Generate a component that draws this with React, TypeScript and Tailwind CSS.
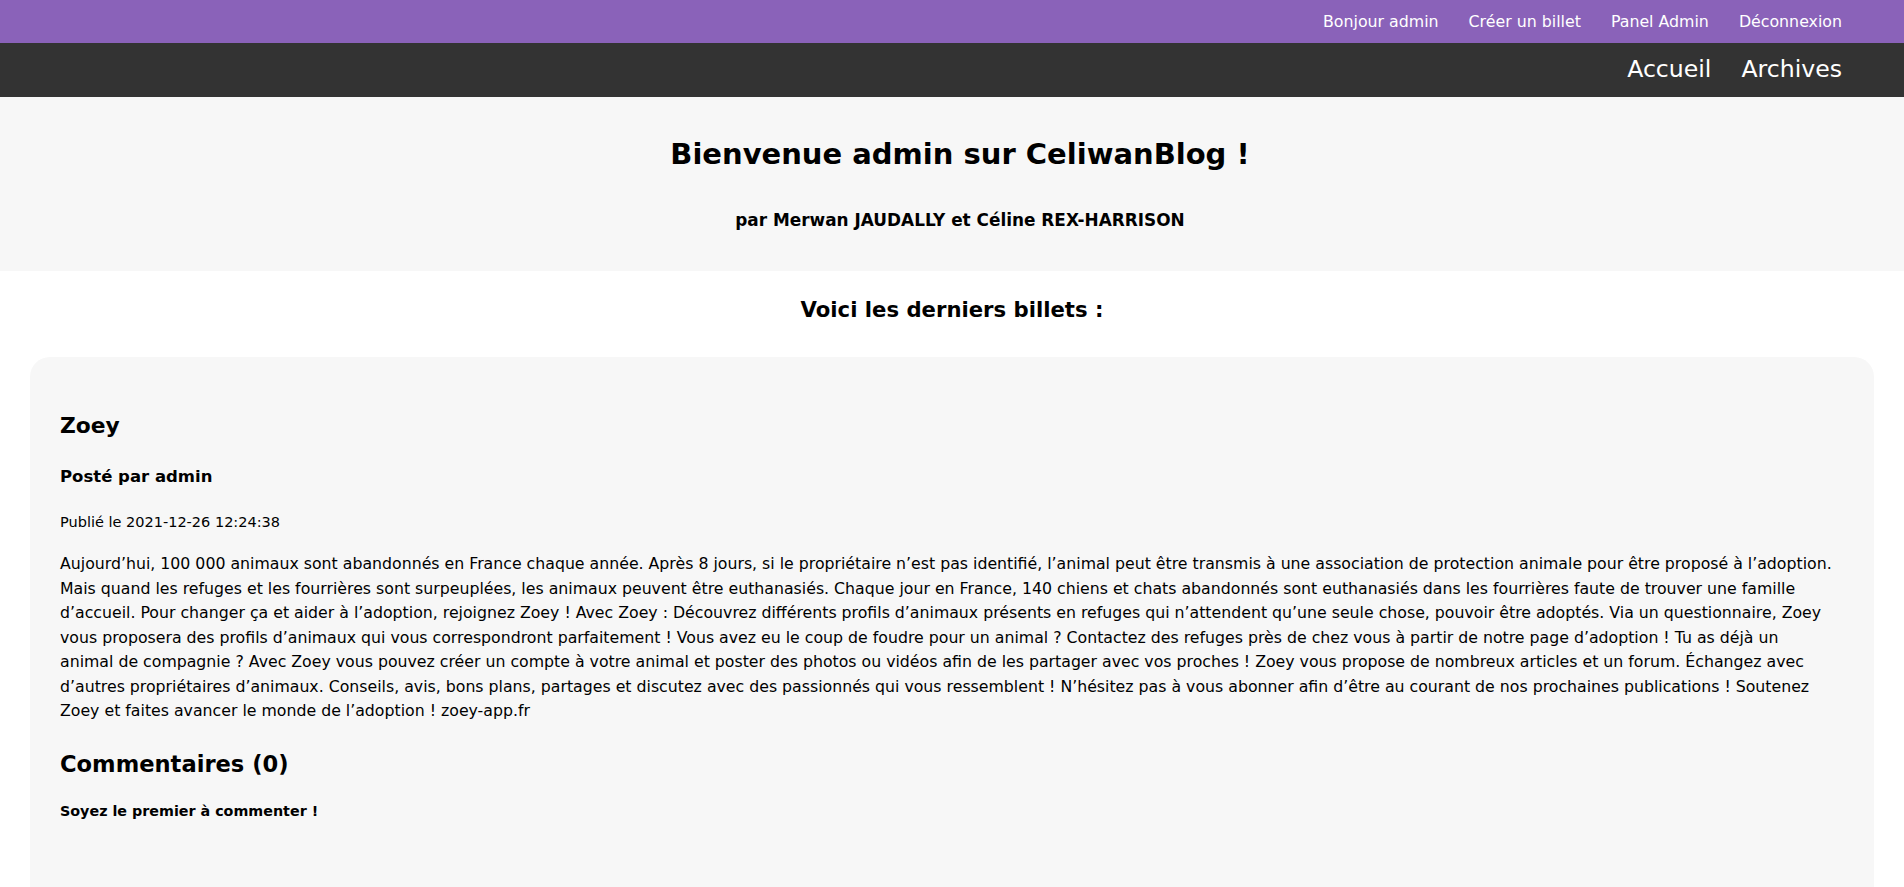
const topLinks = ["Bonjour admin", "Créer un billet", "Panel Admin", "Déconnexion"];
const mainLinks = ["Accueil", "Archives"];

// lignes coupées comme sur la maquette
const contenu = [
  "Aujourd’hui, 100 000 animaux sont abandonnés en France chaque année. Après 8 jours, si le propriétaire n’est pas identifié, l’animal peut être transmis à une association de protection animale pour être proposé à l’adoption.",
  "Mais quand les refuges et les fourrières sont surpeuplées, les animaux peuvent être euthanasiés. Chaque jour en France, 140 chiens et chats abandonnés sont euthanasiés dans les fourrières faute de trouver une famille",
  "d’accueil. Pour changer ça et aider à l’adoption, rejoignez Zoey ! Avec Zoey : Découvrez différents profils d’animaux présents en refuges qui n’attendent qu’une seule chose, pouvoir être adoptés. Via un questionnaire, Zoey",
  "vous proposera des profils d’animaux qui vous correspondront parfaitement ! Vous avez eu le coup de foudre pour un animal ? Contactez des refuges près de chez vous à partir de notre page d’adoption ! Tu as déjà un",
  "animal de compagnie ? Avec Zoey vous pouvez créer un compte à votre animal et poster des photos ou vidéos afin de les partager avec vos proches ! Zoey vous propose de nombreux articles et un forum. Échangez avec",
  "d’autres propriétaires d’animaux. Conseils, avis, bons plans, partages et discutez avec des passionnés qui vous ressemblent ! N’hésitez pas à vous abonner afin d’être au courant de nos prochaines publications ! Soutenez",
  "Zoey et faites avancer le monde de l’adoption ! zoey-app.fr",
];

export default function App() {
  return (
    <div className="min-h-screen bg-white text-black font-['DejaVu_Sans',sans-serif]">
      {/* Barre admin */}
      <nav className="h-[43px] bg-[#8a62b9] flex items-center justify-end gap-[30px] pr-[62px] text-white text-[15.8px]">
        {topLinks.map((l) => (
          <a key={l} href="#" className="leading-none">
            {l}
          </a>
        ))}
      </nav>

      {/* Menu principal */}
      <nav className="h-[54px] bg-[#333333] flex items-center justify-end gap-[30px] pr-[62px] text-white text-[23.6px]">
        {mainLinks.map((l) => (
          <a key={l} href="#" className="leading-none">
            {l}
          </a>
        ))}
      </nav>

      {/* En-tête */}
      <header className="h-[174px] bg-[#f7f7f7] pt-[39px] pl-[16px] text-center">
        <h1 className="text-[29px] leading-[36px] font-bold">
          Bienvenue admin sur CeliwanBlog !
        </h1>
        <p className="mt-[36px] text-[16.9px] leading-[24px] font-bold">
          par Merwan JAUDALLY et Céline REX-HARRISON
        </p>
      </header>

      <h2 className="mt-[25px] text-center text-[21.2px] leading-[28px] font-bold">
        Voici les derniers billets :
      </h2>

      {/* Billet */}
      <article className="mt-[33px] mx-[30px] rounded-[20px] bg-[#f7f7f7] pl-[30px] pr-[30px] pt-[55px] pb-[120px]">
        <h2 className="text-[21.8px] leading-[28px] font-bold">Zoey</h2>
        <h3 className="mt-[25px] text-[16.5px] leading-[24px] font-bold">
          Posté par admin
        </h3>
        <p className="mt-[22px] text-[14.5px] leading-[22px]">
          Publié le 2021-12-26 12:24:38
        </p>
        <p className="mt-[19px] text-[15.75px] leading-[24.5px]">
          {contenu.map((ligne, i) => (
            <span key={i} className="block whitespace-nowrap">
              {ligne}
            </span>
          ))}
        </p>

        <h2 className="mt-[25px] text-[22.6px] leading-[30px] font-bold">
          Commentaires (0)
        </h2>
        <p className="mt-[22px] text-[14.3px] leading-[20px] font-bold">
          Soyez le premier à commenter !
        </p>
      </article>
    </div>
  );
}
